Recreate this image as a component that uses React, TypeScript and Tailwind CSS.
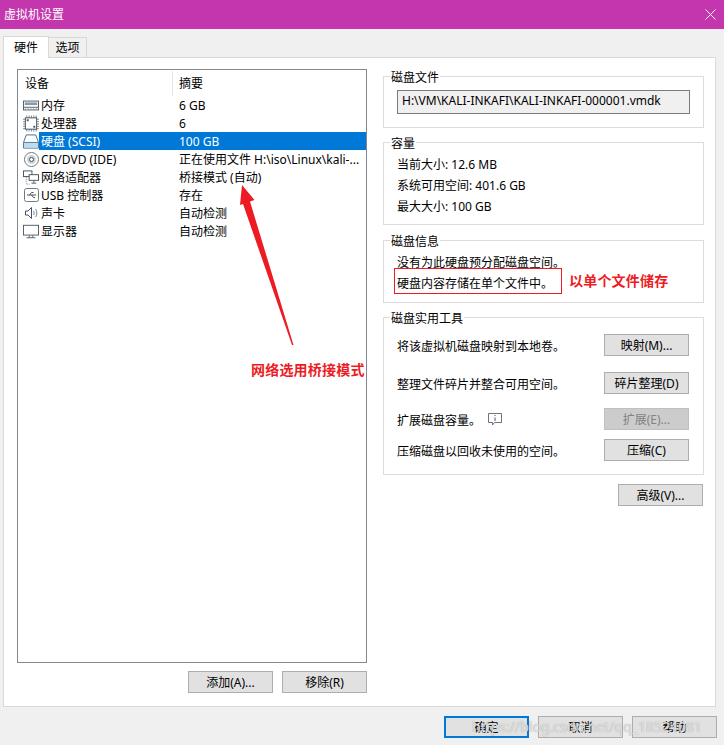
import type { ReactNode } from "react";

const font = "font-['Noto_Sans','Noto_Sans_CJK_SC',sans-serif]";

function MemoryIcon() {
  return (
    <svg width="18" height="11" viewBox="0 0 18 11" fill="none">
      <rect x="0.5" y="0.5" width="17" height="10" fill="#fff" stroke="#43535f" />
      <rect x="2" y="2" width="14" height="3" fill="#8c99a3" />
      <path d="M1 7.5h16" stroke="#43535f" />
      <path d="M3 8.5v2M6 8.5v2M9 8.5v2M12 8.5v2M15 8.5v2" stroke="#8c99a3" />
    </svg>
  );
}

function CpuIcon() {
  return (
    <svg width="17" height="17" viewBox="0 0 17 17" fill="none">
      <path d="M4 0v17M6.5 0v17M9 0v17M11.5 0v17M14 0v17M0 4h17M0 6.5h17M0 9h17M0 11.5h17M0 14h17" stroke="#7b8892" />
      <rect x="2.5" y="2.5" width="12" height="12" fill="#fff" stroke="#43535f" />
      <rect x="4" y="4" width="2" height="2" fill="#43535f" />
      <rect x="11" y="11" width="2" height="2" fill="#43535f" />
    </svg>
  );
}

function DiskIcon() {
  return (
    <svg width="17" height="15" viewBox="0 0 17 15" fill="none">
      <path d="M3.5 0.5h10l3 8v6h-16v-6z" fill="#fff" stroke="#3f6a8c" />
      <path d="M1 8.5h15" stroke="#3f6a8c" />
      <rect x="1" y="9" width="15" height="5" fill="#bcdcf4" />
    </svg>
  );
}

function CdIcon() {
  return (
    <svg width="15" height="15" viewBox="0 0 15 15" fill="none">
      <circle cx="7.5" cy="7.5" r="7" fill="#fff" stroke="#6b7a85" />
      <circle cx="7.5" cy="7.5" r="4.5" fill="#ccd3d8" />
      <circle cx="7.5" cy="7.5" r="2" fill="#fff" stroke="#43535f" />
    </svg>
  );
}

function NetworkIcon() {
  return (
    <svg width="17" height="15" viewBox="0 0 17 15" fill="none">
      <rect x="0.5" y="0.5" width="9" height="6" fill="#fff" stroke="#43535f" />
      <rect x="6.5" y="4.5" width="10" height="6" fill="#fff" stroke="#43535f" />
      <path d="M11.5 11v2M9 13.5h5" stroke="#43535f" />
      <path d="M3.5 7v7.5h4" stroke="#7b8892" strokeDasharray="1 1" />
    </svg>
  );
}

function UsbIcon() {
  return (
    <svg width="15" height="14" viewBox="0 0 15 14" fill="none">
      <rect x="0.5" y="0.5" width="14" height="13" rx="2" fill="#fff" stroke="#6b7a85" />
      <path d="M3 7h9M5.5 7l2-2.5h2M7.5 7l2 2.5h1.5" stroke="#43535f" />
    </svg>
  );
}

function SoundIcon() {
  return (
    <svg width="13" height="12" viewBox="0 0 13 12" fill="none">
      <path d="M0.5 4v4h2.5l3.5 3.5v-11l-3.5 3.5z" fill="#fff" stroke="#43535f" />
      <path d="M8.5 4c0.8 1 0.8 3 0 4M10.5 2c1.8 2 1.8 6 0 8" stroke="#7b8892" />
    </svg>
  );
}

function DisplayIcon() {
  return (
    <svg width="18" height="15" viewBox="0 0 18 15" fill="none">
      <rect x="0.5" y="0.5" width="17" height="11" fill="#fff" stroke="#43535f" />
      <path d="M7 12v2M11 12v2M4 14.5h10" stroke="#43535f" />
    </svg>
  );
}

const devices = [
  { name: "内存", summary: "6 GB", icon: <MemoryIcon /> },
  { name: "处理器", summary: "6", icon: <CpuIcon /> },
  { name: "硬盘 (SCSI)", summary: "100 GB", icon: <DiskIcon />, selected: true },
  { name: "CD/DVD (IDE)", summary: "正在使用文件 H:\\iso\\Linux\\kali-...", icon: <CdIcon /> },
  { name: "网络适配器", summary: "桥接模式 (自动)", icon: <NetworkIcon /> },
  { name: "USB 控制器", summary: "存在", icon: <UsbIcon /> },
  { name: "声卡", summary: "自动检测", icon: <SoundIcon /> },
  { name: "显示器", summary: "自动检测", icon: <DisplayIcon /> },
];

function Group({ title, className, children }: { title: string; className: string; children: ReactNode }) {
  return (
    <div className={`relative border border-[#dcdcdc] ${className}`}>
      <span className="absolute left-[6px] top-[-7px] bg-white px-px text-xs leading-4">{title}</span>
      {children}
    </div>
  );
}

function Btn({ children, className = "border border-[#adadad] bg-[#e1e1e1]" }: { children: ReactNode; className?: string }) {
  return (
    <div className={`flex h-[22px] w-[85px] items-center justify-center pt-[2px] text-xs ${className}`}>
      {children}
    </div>
  );
}

function ToolRow({ text, button, className, disabled }: { text: ReactNode; button: string; className: string; disabled?: boolean }) {
  return (
    <div className={`flex items-center justify-between pl-[13px] pr-[14px] ${className}`}>
      <div className="flex items-center pt-[3px] text-xs">{text}</div>
      {disabled ? <Btn className="border border-[#bfbfbf] bg-[#cccccc] text-[#838383]">{button}</Btn> : <Btn>{button}</Btn>}
    </div>
  );
}

export default function App() {
  return (
    <div className={`relative h-[745px] w-[724px] overflow-hidden bg-[#f0f0f0] text-black ${font}`}>
      {/* Title bar */}
      <div className="flex h-[29px] items-center justify-between bg-[#c336ae] pl-1 pr-2 text-xs text-white">
        <span>虚拟机设置</span>
        <svg width="11" height="11" viewBox="0 0 11 11" fill="none">
          <path d="M0.5 0.5l10 10M10.5 0.5l-10 10" stroke="#fff" />
        </svg>
      </div>

      {/* Tabs */}
      <div className="flex h-[28px] items-end pl-[3px]">
        <div className="z-10 mb-[-1px] flex h-[22px] w-[46px] items-center justify-center border border-b-0 border-[#d9d9d9] bg-white text-xs">硬件</div>
        <div className="flex h-[20px] w-[38px] items-center justify-center border border-b-0 border-l-0 border-[#d9d9d9] pt-px text-xs">选项</div>
      </div>

      {/* Tab page */}
      <div className="ml-[3px] flex h-[650px] w-[713px] border border-[#d9d9d9] bg-white pl-[13px] pt-[11px]">
        {/* Left column */}
        <div className="w-[350px]">
          <div className="h-[594px] border border-[#828790] bg-white">
            <div className="flex h-[26px] text-xs">
              <div className="mt-[1px] flex w-[155px] items-center border-r border-[#e5e5e5] pl-[7px]">设备</div>
              <div className="mt-[1px] flex flex-1 items-center pl-[6px]">摘要</div>
            </div>
            {devices.map((d) => (
              <div key={d.name} className="flex h-[18px] items-center text-xs">
                <div className="flex w-[161px] items-center">
                  <div className="flex w-[21px] shrink-0 items-center justify-center pl-[5px]">{d.icon}</div>
                  <div className={`flex h-[18px] flex-1 items-center pl-[2px] pt-[2px] ${d.selected ? "bg-[#0078d7] text-white" : ""}`}>{d.name}</div>
                </div>
                <div className={`flex h-[18px] flex-1 items-center whitespace-nowrap pt-[2px] ${d.selected ? "bg-[#0078d7] text-white" : ""}`}>{d.summary}</div>
              </div>
            ))}
          </div>
          <div className="mt-[8px] flex justify-end gap-[9px]">
            <Btn>添加(A)...</Btn>
            <Btn>移除(R)</Btn>
          </div>
        </div>

        {/* Right column */}
        <div className="ml-[16px] w-[321px] pt-[7px]">
          <Group title="磁盘文件" className="h-[52px]">
            <div className="mx-[13px] mt-[13px] flex h-[24px] items-center border border-[#7a7a7a] bg-[#f0f0f0] pb-[3px] pl-1 text-xs">
              H:\VM\KALI-INKAFI\KALI-INKAFI-000001.vmdk
            </div>
          </Group>
          <Group title="容量" className="mt-[14px] h-[83px]">
            <div className="flex flex-col pl-[13px] pt-[11px] text-xs leading-[21px]">
              <span>当前大小: 12.6 MB</span>
              <span>系统可用空间: 401.6 GB</span>
              <span>最大大小: 100 GB</span>
            </div>
          </Group>
          <Group title="磁盘信息" className="mt-[15px] h-[63px]">
            <div className="flex flex-col pl-[13px] pt-[11px] text-xs leading-[21px]">
              <span>没有为此硬盘预分配磁盘空间。</span>
              <span>硬盘内容存储在单个文件中。</span>
            </div>
          </Group>
          <Group title="磁盘实用工具" className="mt-[14px] h-[158px]">
            <ToolRow className="mt-[16px]" text="将该虚拟机磁盘映射到本地卷。" button="映射(M)..." />
            <ToolRow className="mt-[16px]" text="整理文件碎片并整合可用空间。" button="碎片整理(D)" />
            <ToolRow
              className="mt-[14px]"
              text={
                <>
                  扩展磁盘容量。
                  <svg width="14" height="13" viewBox="0 0 14 13" fill="none" className="mb-[3px] ml-[7px]">
                    <path d="M0.5 0.5h13v9h-7l-2 2.5v-2.5h-4z" stroke="#6b7280" />
                    <path d="M7 2v1M7 4.5v3.5" stroke="#475569" />
                  </svg>
                </>
              }
              button="扩展(E)..."
              disabled
            />
            <ToolRow className="mt-[9px]" text="压缩磁盘以回收未使用的空间。" button="压缩(C)" />
          </Group>
          <div className="mt-[9px] flex justify-end pr-px">
            <Btn>高级(V)...</Btn>
          </div>
        </div>
      </div>

      {/* Dialog buttons */}
      <div className="mt-[9px] flex justify-end gap-[9px] pr-[7px]">
        <Btn className="border-2 border-[#0078d7] bg-[#e1e1e1]">确定</Btn>
        <Btn>取消</Btn>
        <Btn>帮助</Btn>
      </div>

      {/* Annotations drawn on the screenshot */}
      <svg width="80" height="180" viewBox="0 0 80 180" className="absolute left-[230px] top-[170px]" fill="none">
        <path d="M12 15L24.5 30L20 31.5L63.5 175L62 175L13 34L10 35Z" fill="#ed1c24" />
      </svg>
      <div className="absolute left-[251px] top-[362px] text-sm font-bold leading-4 tracking-[0.2px] text-[#ed1c24]">网络选用桥接模式</div>
      <div className="absolute left-[394px] top-[268px] h-[26px] w-[168px] border border-[#ed1c24]" />
      <div className="absolute left-[569px] top-[273px] text-sm font-bold leading-4 tracking-[0.2px] text-[#ed1c24]">以单个文件储存</div>

      {/* Watermark */}
      <div className="absolute left-[472px] top-[717px] whitespace-nowrap text-sm leading-5 text-white/70 [text-shadow:0_0_1px_#8a8a8a]">https://blog.csdn.net/qq_18524081</div>
    </div>
  );
}
